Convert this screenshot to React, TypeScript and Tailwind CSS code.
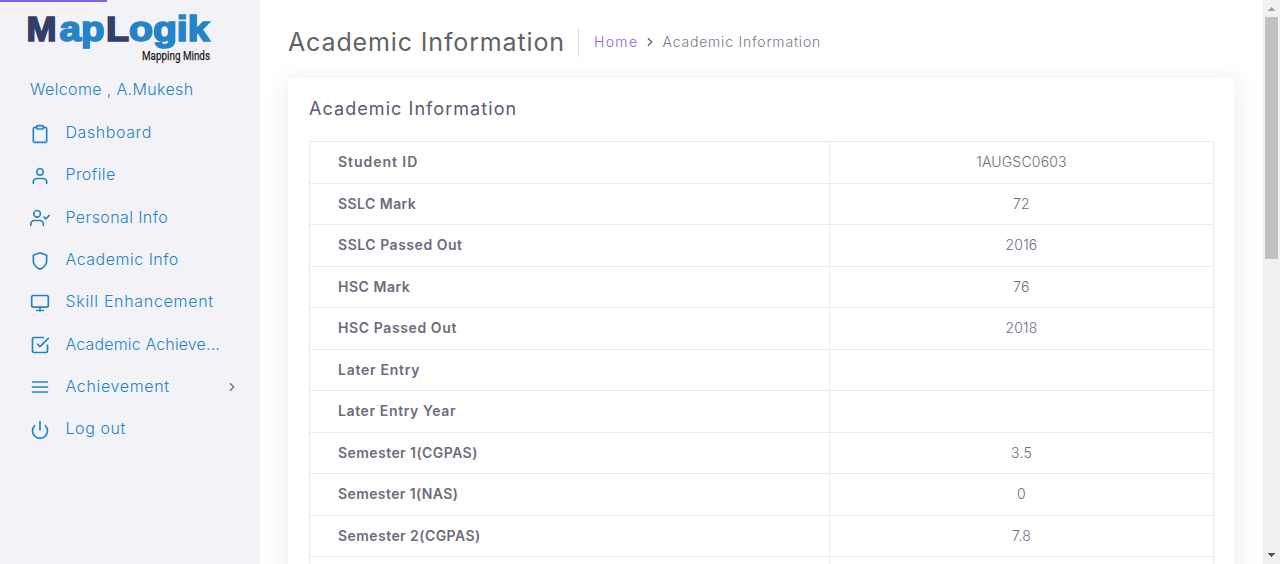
import type { IconType } from 'react-icons';
import { FiCheckSquare, FiChevronRight, FiClipboard, FiMenu, FiMonitor, FiPower, FiShield, FiUser, FiUserCheck } from 'react-icons/fi';

type NavItem = { label: string; icon: IconType; tracking: string; expandable?: boolean };

const navItems: NavItem[] = [
  { label: 'Dashboard', icon: FiClipboard, tracking: 'tracking-[0.58px]' },
  { label: 'Profile', icon: FiUser, tracking: 'tracking-[0.4px]' },
  { label: 'Personal Info', icon: FiUserCheck, tracking: 'tracking-[0.4px]' },
  { label: 'Academic Info', icon: FiShield, tracking: 'tracking-[0.5px]' },
  { label: 'Skill Enhancement', icon: FiMonitor, tracking: 'tracking-[0.69px]' },
  { label: 'Academic Achieve...', icon: FiCheckSquare, tracking: 'tracking-[0.14px]' },
  { label: 'Achievement', icon: FiMenu, tracking: 'tracking-[0.66px]', expandable: true },
  { label: 'Log out', icon: FiPower, tracking: 'tracking-[0.56px]' },
];

const records = [
  { label: 'Student ID', value: '1AUGSC0603', tracking: 'tracking-[0.96px]' },
  { label: 'SSLC Mark', value: '72', tracking: 'tracking-[0.44px]' },
  { label: 'SSLC Passed Out', value: '2016', tracking: 'tracking-[0.52px]' },
  { label: 'HSC Mark', value: '76', tracking: 'tracking-[0.52px]' },
  { label: 'HSC Passed Out', value: '2018', tracking: 'tracking-[0.6px]' },
  { label: 'Later Entry', value: '', tracking: 'tracking-[0.74px]' },
  { label: 'Later Entry Year', value: '', tracking: 'tracking-[0.62px]' },
  { label: 'Semester 1(CGPAS)', value: '3.5', tracking: 'tracking-[0.44px]' },
  { label: 'Semester 1(NAS)', value: '0', tracking: 'tracking-[0.4px]' },
  { label: 'Semester 2(CGPAS)', value: '7.8', tracking: 'tracking-[0.44px]' },
  { label: '', value: '', tracking: 'tracking-normal' },
];

function Logo() {
  return (
    <svg width="190" height="60" viewBox="0 0 190 60" className="block" role="img">
      <g fontFamily="Liberation Sans" fontWeight="700" fontSize="34.5" strokeWidth="1.7">
        <text x="1.5" y="34.5" textLength="30" lengthAdjust="spacingAndGlyphs" fill="#343e68" stroke="#343e68">M</text>
        <text x="34.5" y="34.5" textLength="45" lengthAdjust="spacingAndGlyphs" fill="#2584c8" stroke="#2584c8">ap</text>
        <text x="81" y="34.5" textLength="23" lengthAdjust="spacingAndGlyphs" fill="#343e68" stroke="#343e68">L</text>
        <text x="104" y="34.5" textLength="80.5" lengthAdjust="spacingAndGlyphs" fill="#2584c8" stroke="#2584c8">ogik</text>
      </g>
      <text x="117" y="54" textLength="68" lengthAdjust="spacingAndGlyphs" fontFamily="Roboto" fontWeight="400" fontSize="13" fill="#222222" stroke="#222222" strokeWidth="0.25">Mapping Minds</text>
    </svg>
  );
}

function Sidebar() {
  return (
    <aside className="h-full w-[260px] shrink-0 bg-[#f3f2f7] font-light text-[#2584c6]">
      <div className="h-[2px] w-[107px] bg-[#7367f0]" />
      <div className="pl-[25px] pt-1">
        <Logo />
      </div>
      <p className="mt-[11px] pl-[30px] text-base leading-6 tracking-[0.36px]">Welcome , A.Mukesh</p>
      <nav className="mt-[10px]">
        {navItems.map(({ label, icon: Icon, tracking, expandable }) => (
          <a key={label} href="#" className="flex h-[42.3px] items-center pl-[30px] pr-[21px]">
            <Icon size={20} className="mr-[15.5px] mt-[3px] shrink-0" />
            <span className={`whitespace-nowrap text-base leading-6 ${tracking}`}>{label}</span>
            {expandable && <FiChevronRight size={14} className="ml-auto mt-[2px] text-[#6e6b7b]" />}
          </a>
        ))}
      </nav>
    </aside>
  );
}

function Scrollbar() {
  return (
    <div className="flex h-full w-[17px] shrink-0 flex-col items-center bg-[#f1f1f1]">
      <svg width="17" height="17" shapeRendering="crispEdges">
        <path d="M5 11 L8.5 7 L12 11 Z" fill="#a3a3a3" />
      </svg>
      <div className="h-[242px] w-[13px] bg-[#c1c1c1]" />
      <svg width="17" height="17" className="mt-auto" shapeRendering="crispEdges">
        <path d="M5 6 L8.5 10 L12 6 Z" fill="#505050" />
      </svg>
    </div>
  );
}

export default function App() {
  return (
    <div className="flex h-[564px] w-full overflow-hidden bg-white font-['Inter',sans-serif]">
      <Sidebar />
      <main className="h-full min-w-0 flex-1 overflow-hidden pl-7 pr-7">
        <header className="flex h-[78px] items-center pb-[7px] pt-[13px]">
          <h1 className="border-r border-[#d6dce1] pr-[13px] text-[25px] leading-[29px] tracking-[0.86px] text-[#636363]">Academic Information</h1>
          <div className="flex items-center pl-[15px] text-sm text-[#7b7887]">
            <a href="#" className="font-light tracking-[1.4px] text-[#7367f0]">Home</a>
            <FiChevronRight size={14} className="ml-[4px] mr-[6px] text-[#5e5873]" />
            <span className="font-[350] tracking-[0.8px]">Academic Information</span>
          </div>
        </header>
        <section className="h-[560px] w-[947px] rounded-md bg-white px-[21px] pt-[18px] shadow-[0_4px_24px_0_rgba(34,41,47,0.1)]">
          <h2 className="text-lg leading-[26px] tracking-[1.06px] text-[#5e5873]">Academic Information</h2>
          <table className="mt-[19px] w-[905px] table-fixed border-collapse text-sm text-[#6e6b7b]">
            <colgroup>
              <col className="w-[520px]" />
              <col />
            </colgroup>
            <tbody>
              {records.map(({ label, value, tracking }, index) => (
                <tr key={index} className="h-[41.5px]">
                  <th className={`border border-[#ebe9f1] py-0 pl-7 pr-0 text-left font-semibold leading-5 ${tracking}`}>{label}</th>
                  <td className="border border-[#ebe9f1] p-0 text-center font-[350] leading-5 tracking-[0.2px]">{value}</td>
                </tr>
              ))}
            </tbody>
          </table>
        </section>
      </main>
      <Scrollbar />
    </div>
  );
}
